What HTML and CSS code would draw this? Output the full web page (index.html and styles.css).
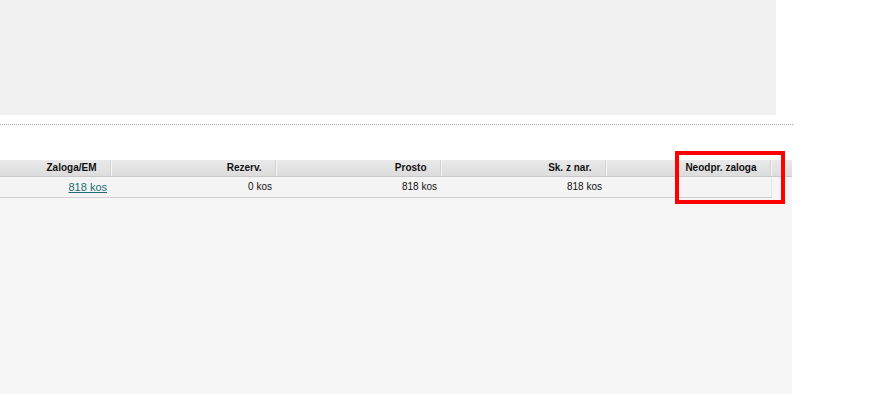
FILE: index.html
```html
<!DOCTYPE html>
<html lang="sl">
<head>
    <meta charset="UTF-8">
    <meta name="viewport" content="width=device-width, initial-scale=1.0">
    <title>Zaloga artikla</title>
    <link rel="stylesheet" href="styles.css">
</head>
<body>
    <div class="info-panel"></div>
    <div class="divider"></div>

    <div class="stock-area">
        <table class="stock-table">
            <thead>
                <tr>
                    <th class="col-first">Zaloga/EM</th>
                    <th>Rezerv.</th>
                    <th>Prosto</th>
                    <th>Sk. z nar.</th>
                    <th>Neodpr. zaloga</th>
                    <th class="col-fill"></th>
                </tr>
            </thead>
            <tbody>
                <tr>
                    <td class="col-first"><a href="#" class="stock-link">818 kos</a></td>
                    <td>0 kos</td>
                    <td>818 kos</td>
                    <td>818 kos</td>
                    <td class="col-last"></td>
                    <td class="col-fill"></td>
                </tr>
            </tbody>
        </table>
        <div class="highlight"></div>
    </div>
</body>
</html>
```

FILE: styles.css
```css
* {
    margin: 0;
    padding: 0;
    box-sizing: border-box;
}

body {
    font-family: 'Liberation Sans', Arial, sans-serif;
    background: #ffffff;
    color: #000;
    height: 394px;
    overflow: hidden;
}

.info-panel {
    width: 776px;
    height: 115px;
    background: #f0f0f0;
}

.divider {
    width: 793px;
    margin-top: 9px;
    border-top: 1px dotted #a8a8a8;
}

.stock-area {
    position: relative;
    width: 792px;
    height: 234px;
    margin-top: 35px;
    background: #f5f5f5;
}

.stock-table {
    border-collapse: collapse;
    table-layout: fixed;
    width: 792px;
}

.stock-table th {
    width: 165px;
    height: 16px;
    padding: 0 14px 0 4px;
    text-align: right;
    font-size: 10px;
    font-weight: bold;
    color: #111;
    background: linear-gradient(#e9e9e9, #dcdcdc);
    border-bottom: 1px solid #c9c9c9;
    border-right: 1px solid #f7f7f7;
    box-shadow: inset -1px 0 0 #d0d0d0;
}

.stock-table th.col-first {
    width: 111px;
}

.stock-table th.col-fill {
    width: auto;
    border-right: none;
    box-shadow: none;
}

.stock-table td {
    height: 21px;
    padding: 0 4px;
    text-align: right;
    font-size: 10px;
    color: #111;
    background: #f4f4f4;
    border-bottom: 1px solid #d2d2d2;
}

.stock-table td.col-last {
    border-right: 1px solid #e6e6e6;
}

.stock-table td.col-fill {
    background: #f5f5f5;
    border-bottom: none;
}

.stock-link {
    font-size: 11px;
    color: #236b73;
    text-decoration: underline;
}

/* red frame around the unconfirmed stock column */
.highlight {
    position: absolute;
    left: 675px;
    top: -9px;
    width: 110px;
    height: 53px;
    border: 4px solid #ff0000;
}
```
